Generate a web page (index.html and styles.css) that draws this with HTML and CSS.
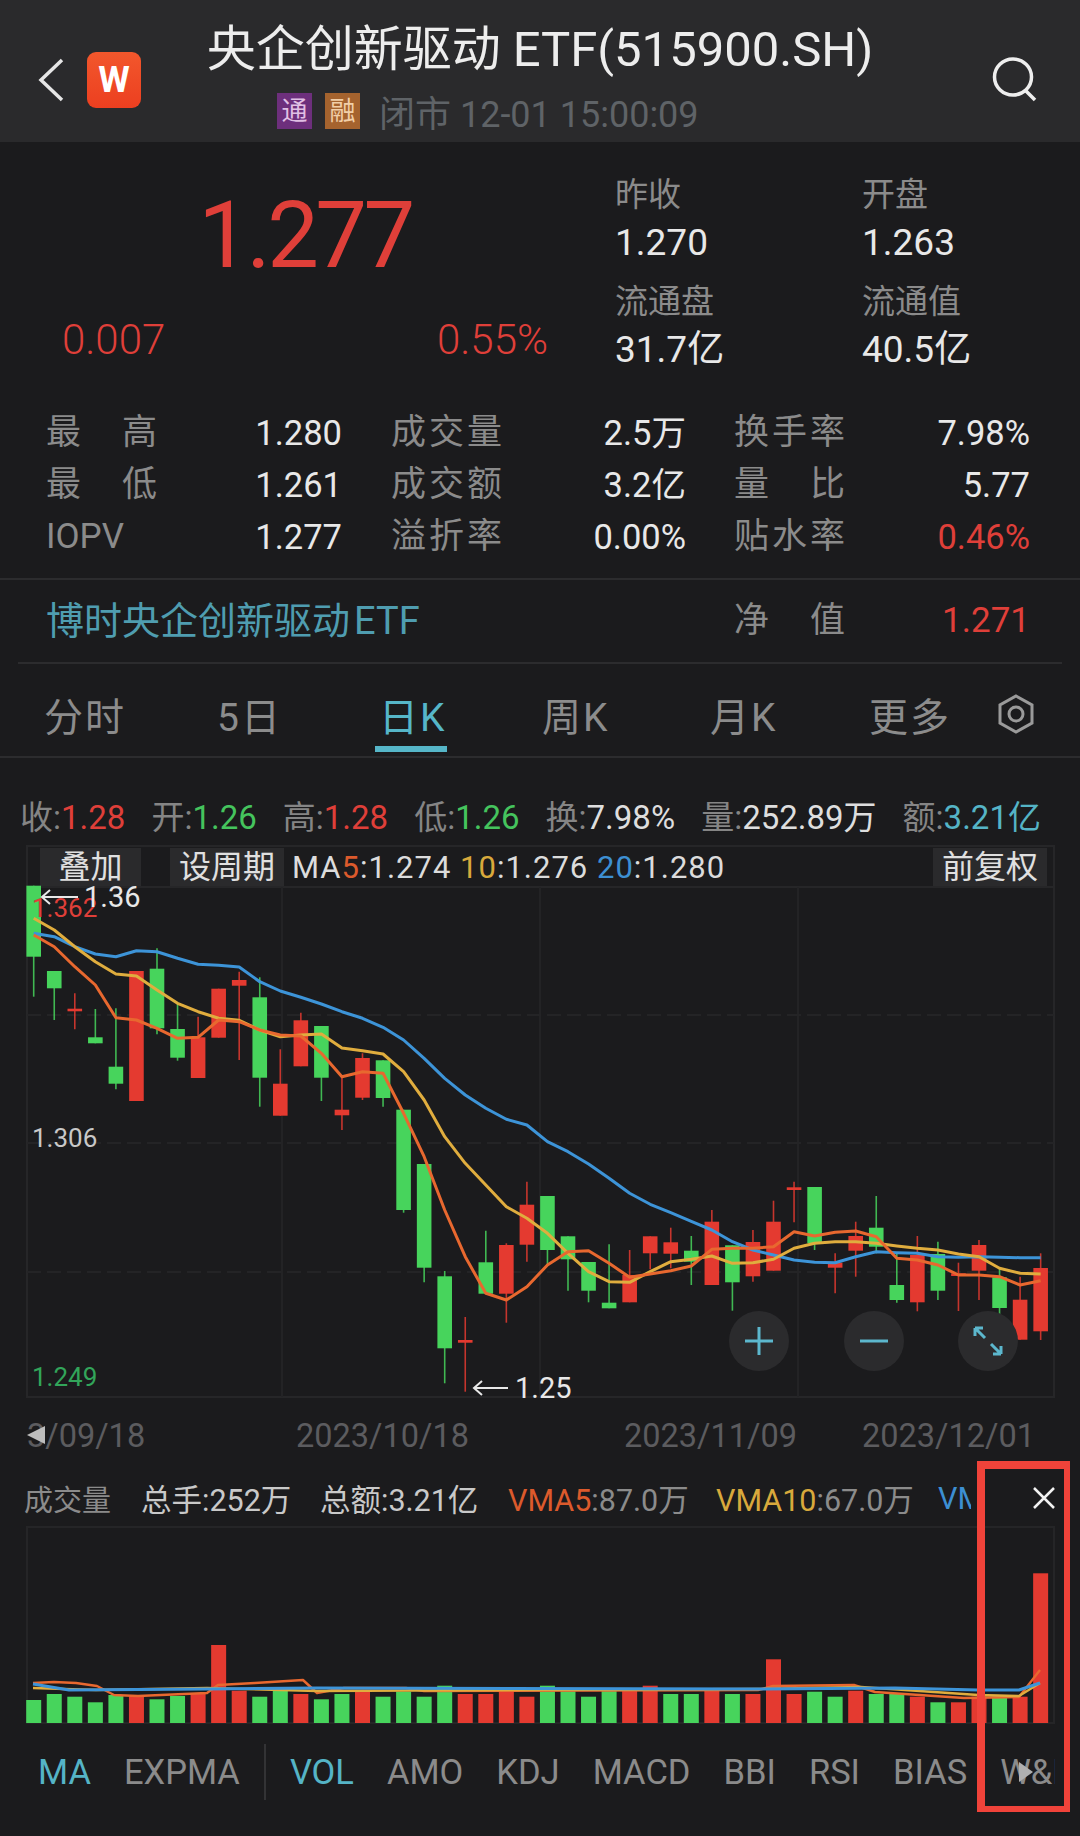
FILE: index.html
```html
<!DOCTYPE html>
<html lang="zh">

<head>
    <meta charset="utf-8">
    <title>央企创新驱动ETF</title>
    <link rel="stylesheet" href="styles.css">
</head>

<body>
    <header class="topbar">
        <div class="topbar-left">
            <svg class="back" width="26" height="44" viewBox="0 0 26 44"><path d="M24 2 L3 22 L24 42" /></svg>
            <div class="logo">W</div>
        </div>
        <div class="topbar-mid">
            <h1>央企创新驱动<span class="h1-latin">ETF(515900.SH)</span></h1>
            <div class="sub">
                <span class="badge badge-tong">通</span>
                <span class="badge badge-rong">融</span>
                <span class="status">闭市 12-01 15:00:09</span>
            </div>
        </div>
        <svg class="search" width="46" height="46" viewBox="0 0 46 46"><ellipse cx="21" cy="21" rx="18.5" ry="18" /><path d="M33 34 L43 44" /></svg>
    </header>

    <section class="quote">
        <div class="quote-main">
            <div class="price">1.277</div>
            <div class="change"><span>0.007</span><span>0.55%</span></div>
        </div>
        <div class="kv-grid">
            <div class="kv"><span>昨收</span><b>1.270</b></div>
            <div class="kv"><span>开盘</span><b>1.263</b></div>
            <div class="kv"><span>流通盘</span><b>31.7亿</b></div>
            <div class="kv"><span>流通值</span><b>40.5亿</b></div>
        </div>
    </section>

    <section class="stats">
        <span class="lbl">最高</span><b>1.280</b><span class="lbl">成交量</span><b>2.5万</b><span class="lbl">换手率</span><b>7.98%</b>
        <span class="lbl">最低</span><b>1.261</b><span class="lbl">成交额</span><b>3.2亿</b><span class="lbl">量比</span><b>5.77</b>
        <span class="lbl">IOPV</span><b>1.277</b><span class="lbl">溢折率</span><b>0.00%</b><span class="lbl">贴水率</span><b class="up">0.46%</b>
    </section>

    <section class="fund">
        <span class="fund-name">博时央企创新驱动<span class="fund-latin">ETF</span></span>
        <span class="lbl">净值</span>
        <b class="up">1.271</b>
    </section>

    <nav class="tabs">
        <a>分时</a>
        <a>5日</a>
        <a class="active">日K</a>
        <a>周K</a>
        <a>月K</a>
        <a>更多</a>
        <svg class="gear" width="36" height="40" viewBox="0 0 36 40"><path d="M18 2 L34 11 L34 29 L18 38 L2 29 L2 11 Z" /><circle cx="18" cy="20" r="7" /></svg>
    </nav>

    <div class="ohlc">
        <span>收:<i class="up">1.28</i></span>
        <span>开:<i class="down">1.26</i></span>
        <span>高:<i class="up">1.28</i></span>
        <span>低:<i class="down">1.26</i></span>
        <span>换:<i class="plain">7.98%</i></span>
        <span>量:<i class="plain">252.89万</i></span>
        <span>额:<i class="teal">3.21亿</i></span>
    </div>

    <section class="chart">
        <div class="chart-bar">
            <span class="chip chip-add">叠加</span>
            <span class="chip chip-period">设周期</span>
            <span class="ma-text">MA<i class="c5">5</i>:1.274 <i class="c10">10</i>:1.276 <i class="c20">20</i>:1.280</span>
            <span class="chip chip-adj">前复权</span>
        </div>
        <div class="plot">
            <svg id="kline" width="1029" height="511" viewBox="26 887 1029 511"></svg>
            <span class="axis axis-high">1.362</span>
            <span class="axis axis-mid">1.306</span>
            <span class="axis axis-low">1.249</span>
            <span class="flag flag-high"><svg width="38" height="18" viewBox="0 0 38 18"><path d="M10 2 L2 9 L10 16 M2 9 H38" /></svg>1.36</span>
            <span class="flag flag-low"><svg width="36" height="18" viewBox="0 0 36 18"><path d="M10 2 L2 9 L10 16 M2 9 H36" /></svg>1.25</span>
            <button class="round round-plus"><svg width="30" height="30" viewBox="0 0 30 30"><path d="M15 1 V29 M1 15 H29" /></svg></button>
            <button class="round round-minus"><svg width="30" height="30" viewBox="0 0 30 30"><path d="M1 15 H29" /></svg></button>
            <button class="round round-zoom"><svg width="32" height="32" viewBox="0 0 32 32"><path d="M3 3 L13 13 M3 3 H11 M3 3 V11 M29 29 L19 19 M29 29 H21 M29 29 V21" /></svg></button>
        </div>
    </section>

    <div class="dates">
        <span>3/09/18</span>
        <span>2023/10/18</span>
        <span>2023/11/09</span>
        <span>2023/12/01</span>
        <i class="dates-arrow"></i>
    </div>

    <div class="vol-head">
        <span class="vol-title">成交量</span>
        <span>总手:252万</span>
        <span>总额:3.21亿</span>
        <span class="vol-dim"><i class="c5">VMA5</i>:87.0万</span>
        <span class="vol-dim"><i class="c10">VMA10</i>:67.0万</span>
        <span class="clip"><i class="c20">VMA20</i></span>
        <svg class="close" width="24" height="24" viewBox="0 0 24 24"><path d="M2 2 L22 22 M22 2 L2 22" /></svg>
    </div>

    <svg id="volume" width="1029" height="196" viewBox="26 1527 1029 196"></svg>

    <nav class="indicators">
        <a class="on">MA</a>
        <a>EXPMA</a>
        <i class="sep"></i>
        <a class="on">VOL</a>
        <a>AMO</a>
        <a>KDJ</a>
        <a>MACD</a>
        <a>BBI</a>
        <a>RSI</a>
        <a>BIAS</a>
        <a class="clip-last">W&amp;R</a>
        <i class="more-arrow"></i>
    </nav>

    <div class="mark"></div>

    <script src="chart.js"></script>
</body>

</html>
```

FILE: styles.css
```css
* {
    box-sizing: border-box;
}

html {
    background-color: #1b1b1d;
}

body {
    position: relative;
    width: 1080px;
    height: 1836px;
    margin: 0;
    overflow: hidden;
    font-family: Roboto, "Noto Sans CJK SC", sans-serif;
    color: #e4e4e4;
    background-color: #1b1b1d;
}

b {
    font-weight: 400;
}

i {
    font-style: normal;
}

svg {
    display: block;
    fill: none;
}

.up {
    color: #df3f39;
}

.down {
    color: #45c45d;
}

.plain {
    color: #dedede;
}

.teal {
    color: #55b4c6;
}

.c5 {
    color: #dc5a2c;
}

.c10 {
    color: #d8a93c;
}

.c20 {
    color: #3d8fd2;
}

/* header */

.topbar {
    display: grid;
    grid-template-columns: 170px 1fr 170px;
    align-items: start;
    height: 142px;
    background-color: #2a2a2c;
}

.topbar-left {
    display: flex;
    align-items: center;
    gap: 23px;
    padding: 52px 0 0 38px;
}

.back path {
    stroke: #e6e6e6;
    stroke-width: 3.5;
}

.logo {
    width: 54px;
    height: 56px;
    border-radius: 9px;
    font-size: 36px;
    font-weight: 700;
    line-height: 56px;
    text-align: center;
    color: #fff;
    background: linear-gradient(#f2572c, #ec3f20);
}

.topbar-mid h1 {
    margin: 20px 0 0;
    font-size: 49px;
    font-weight: 400;
    line-height: 60px;
    white-space: nowrap;
    text-align: center;
    color: #ededed;
}

.h1-latin {
    margin-left: 12px;
}

.sub {
    display: flex;
    align-items: center;
    height: 40px;
    margin-top: 11px;
    padding-left: 107px;
}

.badge {
    width: 35px;
    height: 36px;
    margin-right: 13px;
    font-size: 26px;
    line-height: 36px;
    text-align: center;
}

.badge-tong {
    color: #e0bfe4;
    background-color: #6d2f7c;
}

.badge-rong {
    color: #f2cfa8;
    background-color: #a5632e;
}

.status {
    margin-left: 6px;
    font-size: 36px;
    color: #5f6367;
}

.search {
    margin: 56px 0 0 82px;
}

.search ellipse,
.search path {
    stroke: #eee;
    stroke-width: 3.5;
}

/* price block */

.quote {
    display: flex;
    height: 253px;
}

.quote-main {
    width: 615px;
    padding: 37px 67px 0 62px;
}

.price {
    height: 110px;
    font-size: 92px;
    font-weight: 400;
    letter-spacing: -3.5px;
    line-height: 114px;
    text-align: center;
    color: #df3f39;
}

.change {
    display: flex;
    justify-content: space-between;
    margin-top: 29px;
    font-size: 42px;
    font-weight: 300;
    line-height: 44px;
    color: #df3f39;
}

.kv-grid {
    display: grid;
    grid-template-columns: 247px 200px;
    row-gap: 11px;
    padding-top: 29px;
    align-content: start;
}

.kv span,
.kv b {
    display: block;
    height: 48px;
    font-size: 33px;
    line-height: 48px;
}

.kv span {
    color: #8b8b8b;
}

.kv b {
    font-size: 37px;
    color: #e8e8e8;
}

/* stats */

.lbl {
    width: 111px;
    font-size: 35px;
    text-align-last: justify;
    color: #8b8b8b;
}

.stats {
    display: grid;
    grid-template-columns: 111px 185px 160px 184px 159px 185px;
    padding: 12px 0 15px 46px;
    border-bottom: 2px solid #2c2c2e;
    font-size: 34.5px;
    line-height: 52px;
}

.stats .lbl {
    justify-self: end;
}

.stats b {
    text-align: right;
    color: #e8e8e8;
}

.stats .up {
    color: #df3f39;
}

.fund {
    display: flex;
    align-items: center;
    height: 84px;
    margin: 0 18px;
    padding: 0 32px 0 28px;
    border-bottom: 2px solid #2c2c2e;
    line-height: 52px;
}

.fund-name {
    flex: 1;
    font-size: 38px;
    color: #4f9db0;
}

.fund-latin {
    margin-left: 4px;
}

.fund b {
    flex: 0 0 185px;
    font-size: 35px;
    text-align: right;
}

/* period tabs */

.tabs {
    display: grid;
    grid-template-columns: 173px 162px 163px 168px 159px 129px auto;
    align-items: center;
    height: 94px;
    padding: 8px 0 0 44px;
    border-bottom: 2px solid #2c2c2e;
    font-size: 39px;
    color: #8c8c8c;
}

.tabs a {
    position: relative;
    justify-self: start;
    white-space: nowrap;
    letter-spacing: 2px;
}

.tabs .active {
    color: #56b6c8;
}

.tabs .active::after {
    content: "";
    position: absolute;
    left: -4px;
    right: -1px;
    bottom: -10px;
    height: 6px;
    background-color: #56b6c8;
}

.gear path,
.gear circle {
    stroke: #9a9a9a;
    stroke-width: 3;
}

.ohlc {
    display: flex;
    justify-content: space-between;
    height: 87px;
    padding: 42px 39px 0 20px;
    font-size: 33px;
    line-height: 36px;
    color: #858585;
}

/* k-line */

.chart {
    width: 1029px;
    margin-left: 26px;
}

.chart-bar {
    display: flex;
    align-items: center;
    height: 42px;
    padding: 1px 6px 0 12px;
    border: solid #262628;
    border-width: 2px 2px 0 2px;
    font-size: 31px;
    color: #dcdcdc;
}

.chip {
    height: 40px;
    font-size: 32px;
    line-height: 38px;
    text-align: center;
    color: #e0e0e0;
    background-color: #2a2a2c;
}

.chip-add {
    width: 101px;
}

.chip-period {
    width: 114px;
    margin-left: 29px;
}

.ma-text {
    margin-left: 8px;
    letter-spacing: 1px;
}

.chip-adj {
    width: 114px;
    margin-left: auto;
}

.plot {
    position: relative;
    height: 511px;
}

#kline,
#volume {
    overflow: visible;
}

.axis {
    position: absolute;
    left: 6px;
    font-size: 26px;
    line-height: 30px;
    color: #c8c8c8;
}

.axis-high {
    top: 6px;
    color: #df3f39;
}

.axis-mid {
    top: 236px;
}

.axis-low {
    top: 475px;
    color: #32a55a;
}

.flag {
    position: absolute;
    display: flex;
    align-items: center;
    font-size: 29px;
    line-height: 32px;
    color: #e8e8e8;
}

.flag svg path {
    stroke: #e8e8e8;
    stroke-width: 2;
}

.flag-high {
    top: -6px;
    left: 14px;
    gap: 6px;
}

.flag-low {
    top: 485px;
    left: 446px;
    gap: 7px;
}

.round {
    position: absolute;
    top: 424px;
    display: flex;
    align-items: center;
    justify-content: center;
    width: 60px;
    height: 60px;
    padding: 0;
    border: 0;
    border-radius: 50%;
    background-color: #2b2b2d;
}

.round path {
    stroke: #5cb7cd;
    stroke-width: 3;
}

.round-plus {
    left: 703px;
}

.round-minus {
    left: 818px;
}

.round-zoom {
    left: 932px;
}

.dates {
    position: relative;
    display: grid;
    grid-template-columns: 269px 328px 238px auto;
    height: 76px;
    padding: 20px 0 0 27px;
    font-size: 32.5px;
    line-height: 36px;
    color: #5c5c5f;
}

.dates-arrow {
    position: absolute;
    top: 28px;
    left: 27px;
    border: solid transparent;
    border-width: 9px 18px 9px 0;
    border-right-color: #bdbdbd;
}

/* volume */

.vol-head {
    display: grid;
    grid-template-columns: 117px 179px 188px 208px 222px 94px 24px;
    align-items: center;
    height: 53px;
    padding: 0 0 5px 24px;
    font-size: 30.5px;
    white-space: nowrap;
    color: #c9c9c9;
}

.vol-title {
    font-size: 29px;
    color: #8b8b8b;
}

.vol-dim {
    color: #8b8b8b;
}

.clip {
    width: 33px;
    overflow: hidden;
}

.close path {
    stroke: #f2f2f2;
    stroke-width: 2.5;
}

#volume {
    margin-left: 26px;
}

.indicators {
    position: relative;
    display: flex;
    align-items: center;
    gap: 33px;
    height: 98px;
    padding-left: 38px;
    font-size: 34.5px;
    color: #8b8b8b;
}

.indicators .on {
    color: #55b4c6;
}

.sep {
    width: 2px;
    height: 56px;
    margin: 0 -9px 0 -9px;
    background-color: #333335;
}

.clip-last {
    width: 55px;
    overflow: hidden;
    white-space: nowrap;
}

.more-arrow {
    position: absolute;
    top: 39px;
    left: 1019px;
    border: solid transparent;
    border-width: 10px 0 10px 14px;
    border-left-color: #b0b0b0;
}

/* red annotation frame */

.mark {
    position: absolute;
    top: 1461px;
    left: 977px;
    width: 93px;
    height: 351px;
    border: solid #f0433a;
    border-width: 8px 6px 6px 8px;
}
```

FILE: chart.js
```js
const GREEN = "#47d45c";
const RED = "#e43a30";
const NS = "http://www.w3.org/2000/svg";

const xOf = (i) => 33.7 + 20.55 * i;

const add = (parent, tag, attrs) => {
    const el = document.createElementNS(NS, tag);
    for (const k in attrs) el.setAttribute(k, attrs[k]);
    parent.appendChild(el);
};

const polyline = (parent, pts, color, width) => {
    add(parent, "polyline", {
        points: pts.join(" "),
        fill: "none",
        stroke: color,
        "stroke-width": width,
        "stroke-linejoin": "round"
    });
};

const series = (ys) => ys.map((y, i) => `${xOf(i)},${y}`);

// color, wick top, body top, body bottom, wick bottom
const candles = [
    ["g", 885.7, 885.7, 956.7, 996.7], ["g", 971, 971, 988.3, 1020], ["r", 993.3, 1008.7, 1011.3, 1029.3],
    ["g", 1009, 1037.3, 1043.3, 1043.3], ["g", 1008.3, 1066.7, 1083.7, 1089.3], ["r", 971, 971, 1101, 1101],
    ["g", 948.3, 968.7, 1028.3, 1034.3], ["g", 1003.3, 1029, 1057.7, 1060.7], ["r", 1016.7, 1037.3, 1078, 1078],
    ["r", 988.7, 988.7, 1037.7, 1037.7], ["r", 971.7, 980, 985.7, 1060], ["g", 977.3, 997.3, 1077.7, 1106.7],
    ["r", 1049.3, 1083.7, 1115.7, 1115.7], ["r", 1012.7, 1020.3, 1066.3, 1066.3], ["g", 1026, 1026, 1077.7, 1101],
    ["r", 1076.7, 1109.7, 1115.3, 1130], ["r", 1053.3, 1058, 1097.7, 1100], ["g", 1060.3, 1060.3, 1098, 1106.7],
    ["g", 1109.7, 1109.7, 1210, 1212.7], ["g", 1164, 1164, 1267.7, 1282.3], ["g", 1271, 1276.3, 1348.3, 1383.3],
    ["r", 1317, 1340, 1342.7, 1391.7], ["g", 1230.7, 1262.3, 1293.7, 1293.7], ["r", 1243.3, 1245, 1293.7, 1322.7],
    ["r", 1181.7, 1204.7, 1244.7, 1261.7], ["g", 1196, 1196, 1250, 1265], ["g", 1236.3, 1236.3, 1259.3, 1290.7],
    ["g", 1262, 1262, 1290.7, 1302.3], ["g", 1244.3, 1302.7, 1308.3, 1308.3], ["r", 1250, 1275, 1302.3, 1302.3],
    ["r", 1236.3, 1236.3, 1253.3, 1269.3], ["r", 1227.7, 1242.3, 1253.7, 1268.3], ["g", 1236, 1250.7, 1261.7, 1285],
    ["r", 1210, 1221.7, 1285, 1285], ["g", 1245.3, 1245.3, 1282.3, 1310.7], ["r", 1230, 1242, 1276.3, 1281.7],
    ["r", 1200.7, 1221.7, 1270.7, 1270.7], ["r", 1181.7, 1187.3, 1190, 1222.3], ["g", 1187, 1187, 1243.3, 1250],
    ["r", 1253.3, 1262.7, 1267.7, 1293.3], ["r", 1221.7, 1236, 1250.7, 1276.7], ["g", 1196, 1227.7, 1246.7, 1253.3],
    ["g", 1253.3, 1285, 1300, 1302.7], ["r", 1236, 1255, 1302.3, 1311.3], ["g", 1241.7, 1254, 1290.7, 1300],
    ["r", 1262.7, 1273.3, 1276, 1311], ["r", 1240, 1245, 1270.7, 1300], ["g", 1268.3, 1277.3, 1308, 1334],
    ["r", 1276.7, 1299.7, 1339.7, 1339.7], ["r", 1253.3, 1268, 1331.3, 1340]
];

const ma5 = [935, 946.7, 966.7, 985, 1017.7, 1020, 1028.3, 1038.3, 1037.3, 1020, 1021.7, 1030, 1035, 1036, 1053.3, 1076.7, 1071.7, 1073.3, 1113.3,
    1156.7, 1210, 1256.7, 1293.3, 1300, 1286.7,
    1265, 1251.7, 1250.7, 1263.3, 1277.3, 1274, 1270.7, 1266, 1249.3, 1248.3, 1248.3, 1246.7, 1231.7, 1236, 1232.3, 1231, 1236.7, 1258.3, 1260, 1265, 1275, 1275, 1276.7, 1285, 1280.7];

const ma10 = [918.3, 930, 946.7, 961.7, 974, 976, 990, 1003.3, 1011.7, 1018.3, 1020.3, 1030, 1036.7, 1035, 1034, 1048, 1050.7, 1054, 1071.7, 1100, 1136.7,
    1163.3, 1185, 1206.7, 1218.3,
    1233.3, 1253.3, 1271.7, 1281.7, 1282.3, 1271.7, 1261.7, 1259.3, 1256, 1263.3, 1262.7, 1259.3, 1248.3, 1243.3, 1241.7, 1241.7, 1243.3, 1246, 1248.3, 1250, 1254, 1256.7, 1268.3, 1273.3, 1274];

const ma20 = [933.3, 936.7, 946.7, 954, 956.7, 950.7, 951.7, 958.3, 964.3, 965.3, 967, 981.7, 991, 997.3, 1004, 1011.7, 1018.3, 1027.3, 1040, 1058.3, 1078.3, 1095, 1108.3, 1119.3, 1125,
    1141.7, 1151.7, 1164, 1178.3, 1193.3, 1204.3, 1212.7, 1221.3, 1230, 1241.7, 1250, 1255, 1260, 1262.3, 1262.7, 1256.7, 1251.7, 1252.7, 1253.3, 1256.7, 1257.3, 1256.7, 1257.3, 1257.7, 1257.7];

const kline = document.getElementById("kline");

// frame and grid
add(kline, "rect", { x: 27, y: 887, width: 1027, height: 510, fill: "none", stroke: "#262628", "stroke-width": 2 });
[282, 540, 798].forEach((x) => {
    add(kline, "line", { x1: x, x2: x, y1: 887, y2: 1397, stroke: "#232325", "stroke-width": 2 });
});
[1015, 1143, 1272].forEach((y) => {
    add(kline, "line", { x1: 27, x2: 1054, y1: y, y2: y, stroke: "#242426", "stroke-width": 2, "stroke-dasharray": "14 6" });
});

candles.forEach((c, i) => {
    const color = c[0] === "g" ? GREEN : RED;
    const x = xOf(i);
    add(kline, "line", { x1: x, x2: x, y1: c[1], y2: c[4], stroke: color, "stroke-width": 1.6, opacity: 0.85 });
    add(kline, "rect", { x: x - 7.3, y: c[2], width: 14.6, height: c[3] - c[2], fill: color });
});

polyline(kline, series(ma20), "#3d94d8", 3);
polyline(kline, series(ma10), "#e0ad3e", 3);
polyline(kline, series(ma5), "#e8682f", 3);

// volume tops, taken from the same 50 days
const volTops = [
    ["g", 1700], ["g", 1694], ["g", 1696.7], ["g", 1702.3], ["g", 1695], ["r", 1695], ["g", 1699.3], ["g", 1696], ["r", 1693.3], ["r", 1645],
    ["r", 1690.7], ["g", 1696.7], ["g", 1690.7], ["r", 1694], ["g", 1699.3], ["g", 1694], ["r", 1690.7], ["g", 1696.7], ["g", 1691.7], ["g", 1696.7],
    ["g", 1685.7], ["r", 1694], ["r", 1694], ["r", 1691.7], ["r", 1696.7], ["g", 1685.7], ["g", 1688.3], ["g", 1696.7], ["g", 1689.3], ["r", 1688.3],
    ["r", 1685.7], ["g", 1694], ["g", 1694], ["r", 1690.7], ["g", 1694], ["r", 1694], ["r", 1659.3], ["r", 1694], ["g", 1691.7], ["g", 1696.7],
    ["r", 1690.7], ["g", 1694], ["g", 1694], ["r", 1696.7], ["g", 1702.3], ["r", 1702.3], ["r", 1696.7], ["g", 1696.7], ["r", 1696.7], ["r", 1573.3]
];

const volume = document.getElementById("volume");

add(volume, "rect", { x: 27, y: 1527, width: 1027, height: 196, fill: "none", stroke: "#252527", "stroke-width": 2 });

volTops.forEach((v, i) => {
    add(volume, "rect", {
        x: xOf(i) - 7.5,
        y: v[1],
        width: 15,
        height: 1723 - v[1],
        fill: v[0] === "g" ? GREEN : RED
    });
});

polyline(volume, ["33,1683", "54,1682", "76,1683", "97,1686", "114,1695", "138,1696", "207,1693", "218,1685", "255,1683", "303,1680", "317,1693", "344,1688", "406,1688", "424,1691", "758,1690", "773,1686", "854,1685", "875,1692", "964,1698", "1019,1697", "1040,1670"], "#e8682f", 2.4);
polyline(volume, ["33,1688", "96,1690", "207,1688", "317,1691", "758,1689", "861,1687", "978,1695", "1019,1696", "1040,1683"], "#e0ad3e", 2.4);
polyline(volume, ["33,1684", "69,1690", "207,1689", "317,1688", "758,1689", "895,1688", "978,1690", "1019,1690", "1040,1683"], "#3d94d8", 3);
```
